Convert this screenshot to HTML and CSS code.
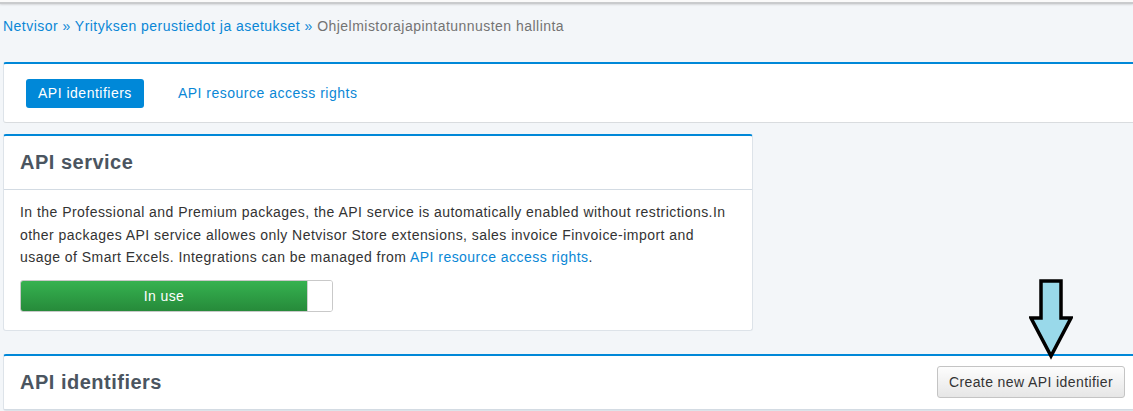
FILE: index.html
```html
<!DOCTYPE html>
<html lang="fi">
<head>
    <meta charset="UTF-8">
    <meta name="viewport" content="width=device-width, initial-scale=1.0">
    <title>Ohjelmistorajapintatunnusten hallinta</title>
    <link rel="stylesheet" href="styles.css">
</head>
<body>
    <div class="topbar"></div>
    <div class="breadcrumb">
        <a href="">Netvisor</a> &raquo; <a href="">Yrityksen perustiedot ja asetukset</a> &raquo; <span>Ohjelmistorajapintatunnusten hallinta</span>
    </div>

    <div class="panel tabs">
        <a href="" class="tab active">API identifiers</a>
        <a href="" class="tab">API resource access rights</a>
    </div>

    <div class="panel service">
        <div class="panel-head">
            <h2>API service</h2>
        </div>
        <div class="panel-body">
            <p>In the Professional and Premium packages, the API service is automatically enabled without restrictions.In<br>
            other packages API service allowes only Netvisor Store extensions, sales invoice Finvoice-import and<br>
            usage of Smart Excels. Integrations can be managed from <a href="">API resource access rights</a>.</p>
            <div class="toggle">
                <div class="toggle-on">In use</div>
                <div class="toggle-knob"></div>
            </div>
        </div>
    </div>

    <div class="panel identifiers">
        <div class="panel-head row">
            <h2>API identifiers</h2>
            <button class="btn-create">Create new API identifier</button>
        </div>
        <!-- arrow pointing at the create button -->
        <svg class="arrow" width="44" height="82" viewBox="0 0 44 82">
            <path d="M12 2 H32 V39 H42 L22 77 L2 39 H12 Z" fill="#99d9ea" stroke="#000" stroke-width="3.5" stroke-linejoin="miter"/>
        </svg>
    </div>
</body>
</html>
```

FILE: styles.css
```css
*{
    margin: 0px;
    padding: 0px;
    box-sizing: border-box;
}
body{
    background-color: #f3f6f9;
    font-family: "Liberation Sans", Arial, sans-serif;
    font-size: 14px;
    letter-spacing: 0.4px;
    color: #333;
    overflow: hidden;
}
a{
    color: #0a87d6;
    text-decoration: none;
}
.topbar{
    height: 4px;
    background-color: #fafafa;
    border-bottom: 2px solid #c9cbcd;
    box-shadow: 0 1px 2px rgba(0,0,0,0.12);
}
.breadcrumb{
    padding-left: 3px;
    margin-top: 13px;
    line-height: 18px;
    letter-spacing: 0.47px;
    color: #0a87d6;
}
.breadcrumb span{
    color: #737373;
}
.panel{
    background-color: #fff;
    border: 1px solid #dde3e9;
    border-top: 2px solid #0088d8;
    border-radius: 3px;
    margin-left: 3px;
}
.tabs{
    margin-top: 27px;
    margin-right: -10px;
    display: flex;
    align-items: center;
    height: 61px;
    padding-left: 22px;
    gap: 22px;
    border-bottom-color: #d9dcdf;
}
.tab{
    line-height: 29px;
    padding: 0 12px;
    border-radius: 3px;
    letter-spacing: 0.5px;
}
.tab.active{
    background-color: #0088d8;
    color: #fff;
}
.service{
    width: 750px;
    margin-top: 11px;
}
.panel-head{
    height: 54px;
    padding-left: 16px;
    display: flex;
    align-items: center;
    border-bottom: 1px solid #d3dbe3;
}
.panel-head h2{
    font-size: 20px;
    letter-spacing: 0.5px;
    color: #4b5560;
}
.panel-body{
    padding: 11px 16px 18px 16px;
}
.panel-body p{
    line-height: 22.5px;
    letter-spacing: 0.46px;
    white-space: nowrap;
}
.toggle{
    display: flex;
    width: 313px;
    height: 32px;
    margin-top: 11px;
    border: 1px solid #c9c9c9;
    border-radius: 3px;
    overflow: hidden;
}
.toggle-on{
    flex: 1;
    background: linear-gradient(#36b250, #268a3a);
    color: #fff;
    text-align: center;
    line-height: 30px;
}
.toggle-knob{
    width: 25px;
    background-color: #fff;
    border-left: 1px solid #d0d0d0;
}
.identifiers{
    margin-top: 23px;
    margin-right: -10px;
    position: relative;
}
.row{
    justify-content: space-between;
    padding-right: 17px;
}
.btn-create{
    font-family: "Liberation Sans", Arial, sans-serif;
    font-size: 14px;
    letter-spacing: 0.4px;
    color: #333;
    height: 32px;
    padding: 0 11px;
    border: 1px solid #c4c4c4;
    border-radius: 3px;
    background: linear-gradient(#fdfdfd, #e6e6e6);
}
.arrow{
    position: absolute;
    left: 1025px;
    top: -77px;
}
```
